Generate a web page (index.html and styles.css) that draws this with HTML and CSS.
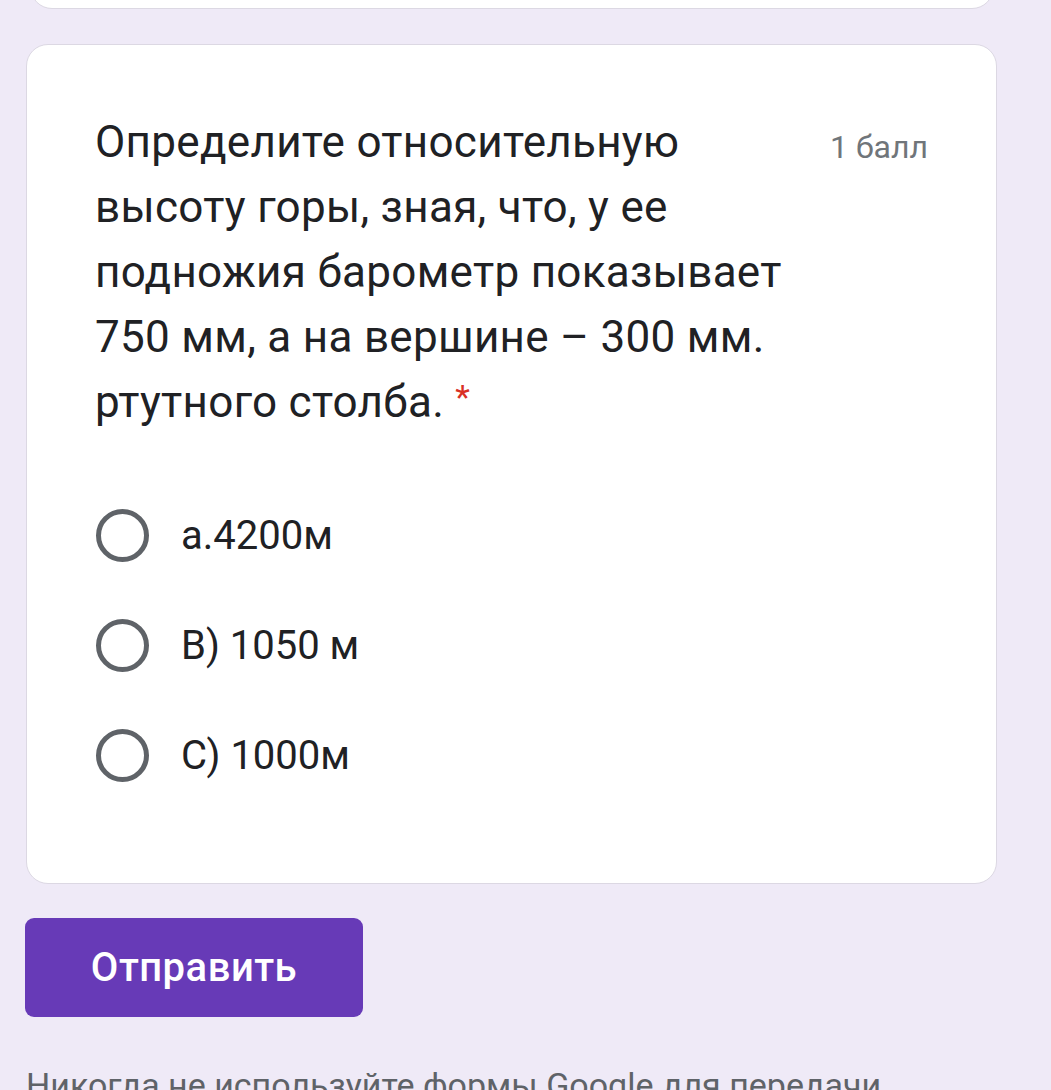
FILE: index.html
```html
<!DOCTYPE html>
<html lang="ru">
<head>
<meta charset="utf-8">
<link rel="stylesheet" href="styles.css">
</head>
<body>
<div class="page">
  <div class="card card-prev"></div>
  <div class="card question">
    <div class="q-head">
      <div class="q-title">Определите относительную высоту горы, зная, что, у ее подножия барометр показывает 750 мм, а на вершине – 300 мм. ртутного столба. <span class="req">*</span></div>
      <div class="points">1 балл</div>
    </div>
    <div class="options">
      <label class="option"><span class="radio"></span><span class="opt-text">а.4200м</span></label>
      <label class="option"><span class="radio"></span><span class="opt-text">В) 1050 м</span></label>
      <label class="option"><span class="radio"></span><span class="opt-text">С) 1000м</span></label>
    </div>
  </div>
  <div class="actions">
    <button class="submit">Отправить</button>
  </div>
  <p class="footer">Никогда не используйте формы Google для передачи паролей.</p>
</div>
</body>
</html>
```
FILE: styles.css
```css
html, body {
  margin: 0;
  padding: 0;
  background: #efeaf7;
  height: 100%;
  overflow: hidden;
}
body {
  font-family: Roboto, "Noto Sans", sans-serif;
  color: #202124;
}
.page {
  width: 971px;
  margin-left: 26px;
}
.card {
  background: #fff;
  border: 1.5px solid #dcd8e3;
  border-radius: 22px;
  box-sizing: border-box;
}
.card-prev {
  height: 60px;
  margin-top: -51px;
  margin-left: 4px;
  margin-right: 3px;
}
.question {
  margin-top: 35px;
  height: 840px;
  padding: 65px 68px 0 68px;
}
.q-head {
  display: flex;
  justify-content: space-between;
  align-items: flex-start;
}
.q-title {
  width: 715px;
  font-size: 44px;
  line-height: 65px;
  letter-spacing: 0.3px;
  color: #202124;
}
.req {
  color: #d93025;
  font-size: 34px;
  line-height: 1;
  vertical-align: 8px;
}
.points {
  font-size: 32px;
  color: #70757a;
  line-height: 40px;
  margin-top: 17px;
  white-space: nowrap;
}
.options {
  display: flex;
  flex-direction: column;
  gap: 57px;
  margin-top: 74px;
}
.option {
  display: flex;
  align-items: center;
  gap: 32px;
  height: 53px;
}
.radio {
  width: 53px;
  height: 53px;
  box-sizing: border-box;
  border: 5px solid #5f6368;
  border-radius: 50%;
  flex: none;
  margin-left: 1px;
}
.opt-text {
  font-size: 40px;
  color: #202124;
}
.actions {
  margin-top: 34px;
}
.submit {
  width: 338px;
  height: 99px;
  margin-left: -1px;
  background: #673ab7;
  color: #fff;
  border: none;
  border-radius: 9px;
  font-family: Roboto, sans-serif;
  font-weight: 500;
  font-size: 40px;
  letter-spacing: 0.5px;
  padding: 0;
}
.footer {
  margin: 48px 0 0 0;
  font-size: 34px;
  color: #5f6368;
  line-height: 40px;
}
```
